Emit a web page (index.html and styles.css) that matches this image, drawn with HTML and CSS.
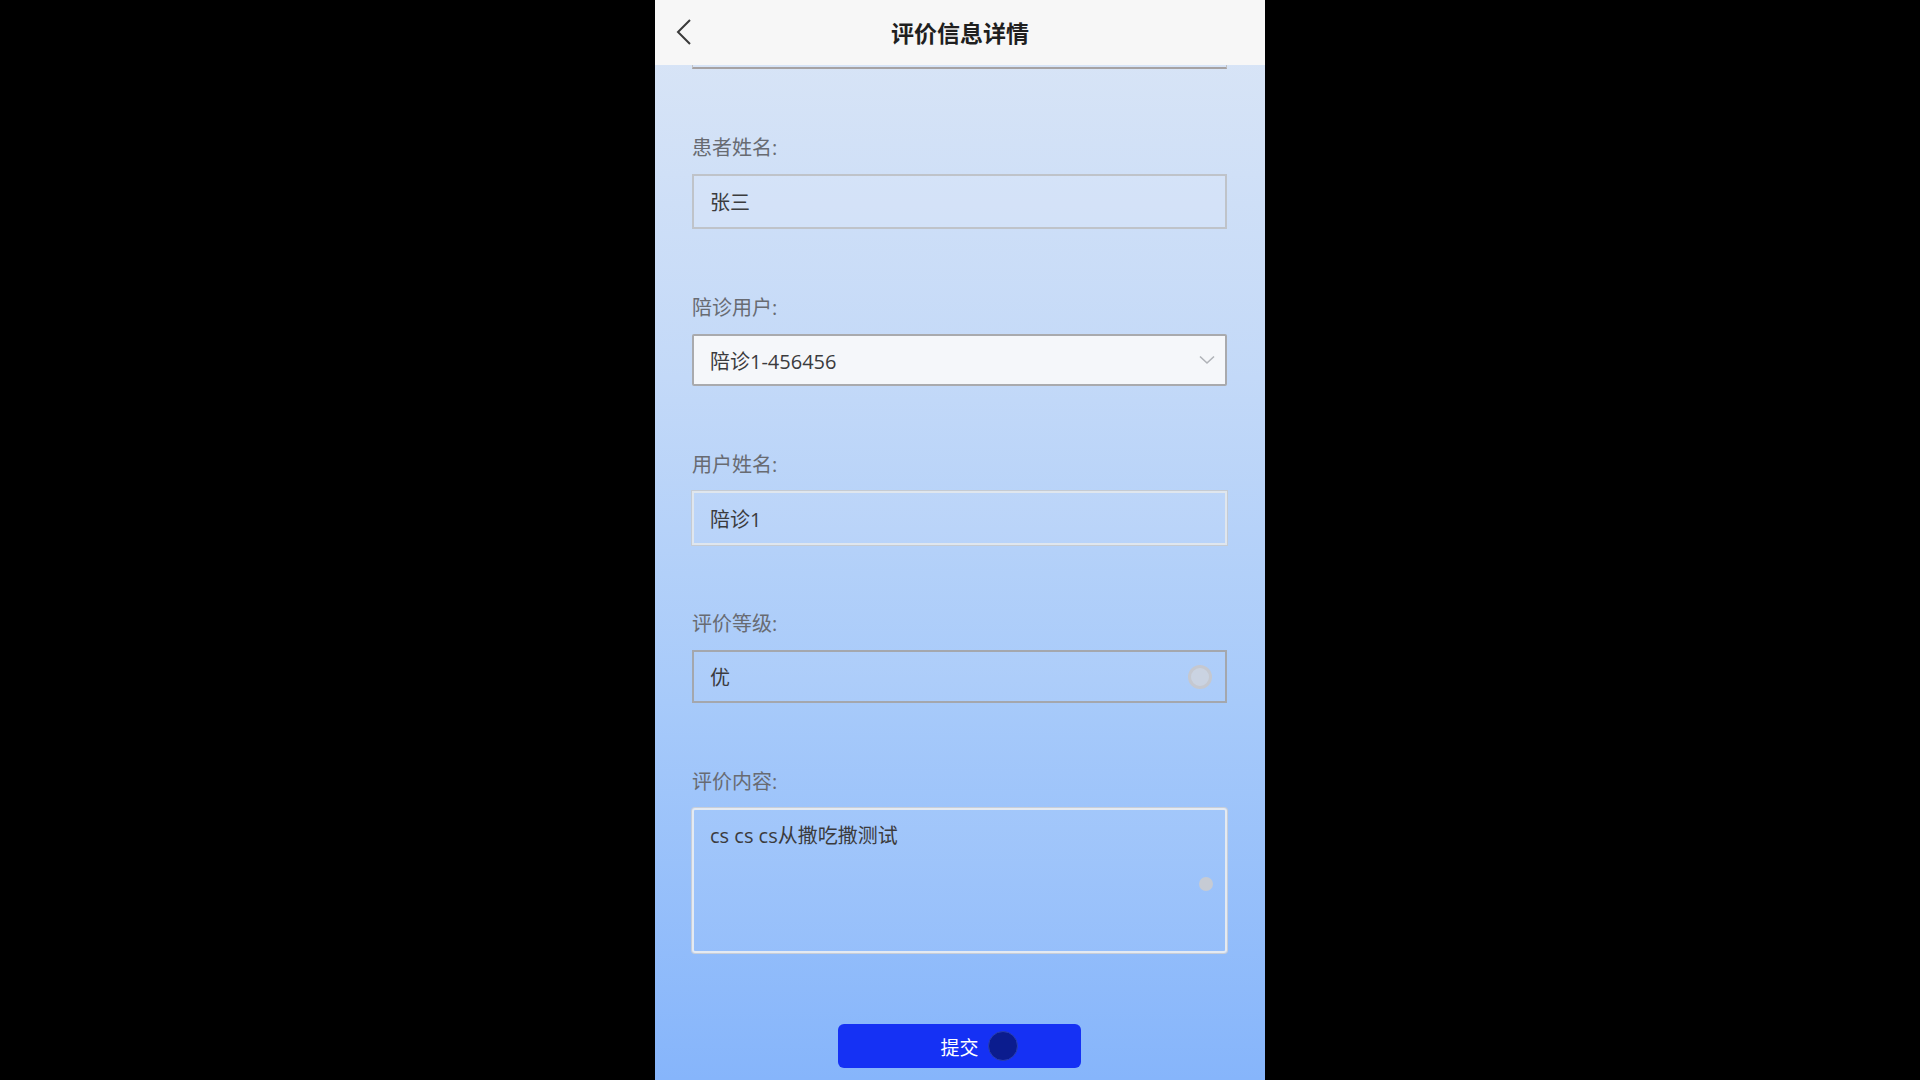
FILE: index.html
```html
<!DOCTYPE html>
<html lang="zh-CN">
<head>
<meta charset="utf-8">
<title>评价信息详情</title>
<link rel="stylesheet" href="styles.css">
</head>
<body>
<div class="phone">
  <header class="topbar">
    <span class="back">
      <svg width="16" height="26" viewBox="0 0 16 26"><polyline points="14,1 2,13 14,25" fill="none" stroke="#3a3a3a" stroke-width="2"/></svg>
    </span>
    <h1 class="title">评价信息详情</h1>
    <span></span>
  </header>
  <main class="content">
    <div class="peek"></div>

    <div class="field">
      <div class="label">患者姓名:</div>
      <div class="box box-plain">张三</div>
    </div>

    <div class="field">
      <div class="label">陪诊用户:</div>
      <div class="box box-select">
        <span>陪诊1-456456</span>
        <svg width="16" height="10" viewBox="0 0 16 10"><polyline points="1,1.5 8,8 15,1.5" fill="none" stroke="#b0b3b8" stroke-width="1.6"/></svg>
      </div>
    </div>

    <div class="field">
      <div class="label">用户姓名:</div>
      <div class="box box-light">陪诊1</div>
    </div>

    <div class="field">
      <div class="label">评价等级:</div>
      <div class="box box-grade">
        <span>优</span>
        <span class="ring"></span>
      </div>
    </div>

    <div class="field">
      <div class="label">评价内容:</div>
      <div class="box box-area">
        cs cs cs从撒吃撒测试
        <span class="dot"></span>
      </div>
    </div>

    <div class="actions">
      <button class="submit">提交<span class="tap"></span></button>
    </div>
  </main>
</div>
</body>
</html>
```
FILE: styles.css
```css
html, body {
  margin: 0;
  padding: 0;
  background: #000;
}
body {
  font-family: "Open Sans", "Noto Sans CJK SC", sans-serif;
}
.phone {
  width: 610px;
  height: 1080px;
  margin: 0 auto;
  overflow: hidden;
  display: flex;
  flex-direction: column;
  background: linear-gradient(180deg, #dbe6f6 0%, #c3d9f8 35%, #a7cafa 65%, #86b5fb 100%);
}
.topbar {
  height: 65px;
  flex: none;
  background: #f7f7f7;
  display: grid;
  grid-template-columns: 1fr auto 1fr;
  align-items: center;
  padding-left: 21px;
  padding-right: 21px;
  box-sizing: border-box;
}
.back {
  display: flex;
  align-items: center;
  height: 26px;
  margin-top: -2px;
}
.title {
  margin: 0;
  font-family: "Noto Sans CJK SC", sans-serif;
  font-size: 23px;
  font-weight: 700;
  color: #1f1f1f;
  line-height: 30px;
  margin-top: -1px;
}
.content {
  flex: 1;
  padding: 0 38px 0 37px;
  display: flex;
  flex-direction: column;
}
.peek {
  height: 2px;
  border: 1px solid #c2c2c4;
  border-top: none;
  border-bottom: 2px solid #a6a2a3;
}
.field {
  margin-top: 66px;
  display: flex;
  flex-direction: column;
}
.label {
  font-size: 20px;
  line-height: 26px;
  height: 26px;
  color: #686b72;
  margin-bottom: 13px;
}
.box {
  box-sizing: border-box;
  height: 54px;
  padding: 0 16px;
  font-size: 20px;
  color: #3b3b3d;
  display: flex;
  align-items: center;
  justify-content: space-between;
}
.box-plain {
  height: 55px;
  border: 2px solid #bfc3c9;
  background: rgba(255, 255, 255, 0.12);
}
.box-select {
  height: 52px;
  border: 2px solid #a9aaad;
  background: #f5f7fa;
  border-radius: 2px;
  padding-right: 10px;
}
.box-light {
  border: 2px solid #dfe6ee;
  outline: 1px solid #c5cbd3;
  background: rgba(255, 255, 255, 0.06);
}
.box-grade {
  height: 53px;
  border: 2px solid #a4a7ad;
  background: rgba(255, 255, 255, 0.05);
  padding-right: 13px;
}
.ring {
  width: 18px;
  height: 18px;
  border-radius: 50%;
  border: 3px solid #cac8c9;
  background: #d0d5de;
  opacity: 0.85;
}
.box-area {
  position: relative;
  height: 145px;
  align-items: flex-start;
  padding-top: 10px;
  border: 2px solid #e4eaf2;
  box-shadow: 0 0 0 1px #c8ced8;
  border-radius: 3px;
  background: rgba(255, 255, 255, 0.05);
}
.dot {
  position: absolute;
  right: 12px;
  top: 67px;
  width: 14px;
  height: 14px;
  border-radius: 50%;
  background: #c6cbd4;
}
.actions {
  margin-top: 71px;
  display: flex;
  justify-content: center;
}
.submit {
  position: relative;
  width: 243px;
  height: 44px;
  border: none;
  border-radius: 6px;
  background: #1531f4;
  color: #fff;
  font-family: "Noto Sans CJK SC", sans-serif;
  font-size: 19px;
  padding: 0;
}
.tap {
  position: absolute;
  left: 150px;
  top: 7px;
  width: 28px;
  height: 28px;
  border-radius: 50%;
  background: #0b1c8e;
  border: 1px solid #2a3fb0;
}
```
